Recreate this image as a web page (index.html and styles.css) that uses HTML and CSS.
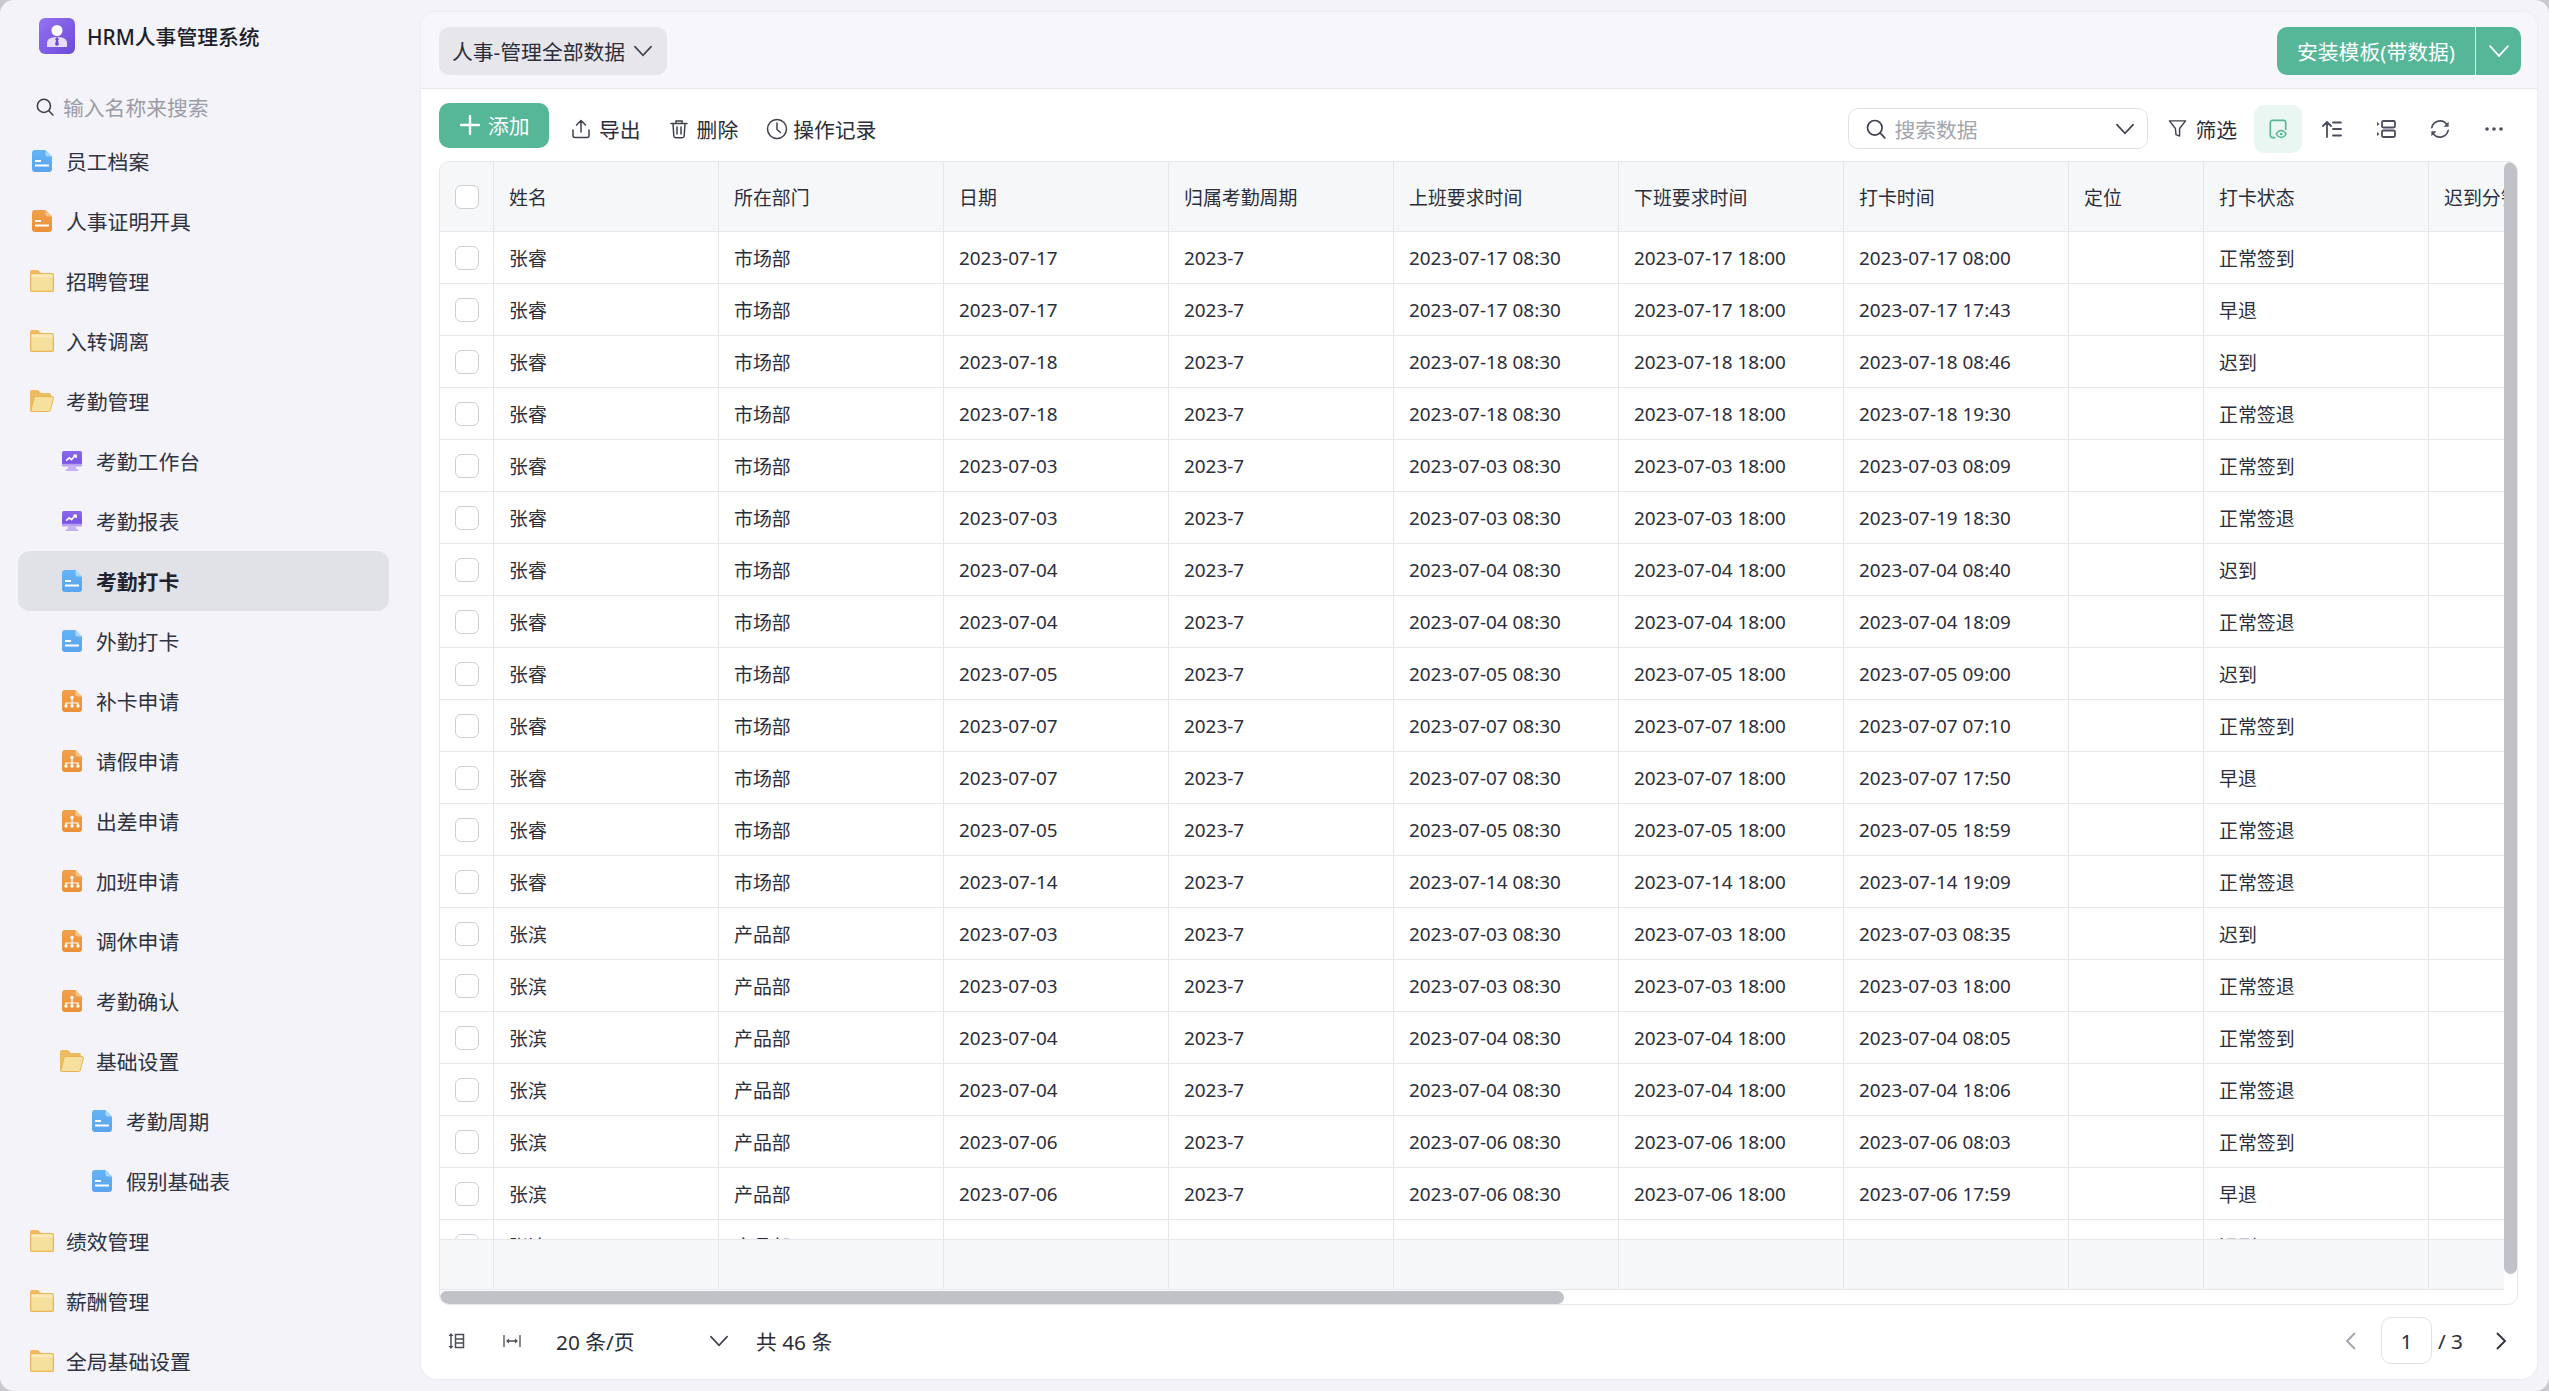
FILE: index.html
```html
<!DOCTYPE html>
<html>

<head>
  <meta charset="utf-8">
  <title>HRM人事管理系统</title>
  <link rel="stylesheet" href="styles.css">
</head>

<body>
  <svg class="sprite" xmlns="http://www.w3.org/2000/svg">
    <defs>
      <linearGradient id="gradLogo" x1="0" y1="0" x2="1" y2="1"><stop offset="0" stop-color="#9473f2"/><stop offset="1" stop-color="#6c49d8"/></linearGradient>
      <linearGradient id="gradBlue" x1="0" y1="0" x2="0" y2="1"><stop offset="0" stop-color="#64b3f6"/><stop offset="1" stop-color="#5aa4ee"/></linearGradient>
      <linearGradient id="gradOrange" x1="0" y1="0" x2="0" y2="1"><stop offset="0" stop-color="#f0a04c"/><stop offset="1" stop-color="#eb9038"/></linearGradient>
      <linearGradient id="gradPurple" x1="0" y1="0" x2="0" y2="1"><stop offset="0" stop-color="#8a68ea"/><stop offset="1" stop-color="#7752e2"/></linearGradient>
    </defs>
    <symbol id="iconDocBlue" viewBox="0 0 20 22">
      <path fill="url(#gradBlue)" d="M3 0h10.5L20 6.5V19a3 3 0 0 1-3 3H3a3 3 0 0 1-3-3V3a3 3 0 0 1 3-3z"/>
      <path fill="#a9d8fb" d="M13.5 0L20 6.5h-4.5a2 2 0 0 1-2-2z"/>
      <rect fill="#fff" x="3" y="10" width="6" height="2"/>
      <rect fill="#fff" x="3" y="14.5" width="14" height="2"/>
    </symbol>
    <symbol id="iconDocOrange" viewBox="0 0 20 22">
      <path fill="url(#gradOrange)" d="M3 0h10.5L20 6.5V19a3 3 0 0 1-3 3H3a3 3 0 0 1-3-3V3a3 3 0 0 1 3-3z"/>
      <path fill="#f7c48d" d="M13.5 0L20 6.5h-4.5a2 2 0 0 1-2-2z"/>
      <rect fill="#fff" x="3" y="10" width="6" height="2"/>
      <rect fill="#fff" x="3" y="14.5" width="14" height="2"/>
    </symbol>
    <symbol id="iconOrg" viewBox="0 0 20 22">
      <path fill="url(#gradOrange)" d="M3 0h10.5L20 6.5V19a3 3 0 0 1-3 3H3a3 3 0 0 1-3-3V3a3 3 0 0 1 3-3z"/>
      <path fill="#f7c48d" d="M13.5 0L20 6.5h-4.5a2 2 0 0 1-2-2z"/>
      <path fill="none" stroke="#fff" stroke-width="1.2" d="M10 8v8M4 16v-3h12v3"/>
      <circle fill="#fff" cx="10" cy="7.5" r="1.7"/>
      <circle fill="#fff" cx="4" cy="16" r="1.7"/>
      <circle fill="#fff" cx="10" cy="16" r="1.7"/>
      <circle fill="#fff" cx="16" cy="16" r="1.7"/>
    </symbol>
    <symbol id="iconFolder" viewBox="0 0 24 22">
      <path fill="#edbb60" d="M2 0h6l3 3h11a2 2 0 0 1 2 2v15a2 2 0 0 1-2 2H2a2 2 0 0 1-2-2V2a2 2 0 0 1 2-2z"/>
      <rect fill="#f6e09d" x="0.8" y="3.8" width="22.4" height="17.4" rx="1.6" stroke="#e9b355" stroke-width="1"/>
      <rect fill="#f9e9b6" x="1.4" y="4.4" width="21.2" height="3"/>
    </symbol>
    <symbol id="iconFolderOpen" viewBox="0 0 24 22">
      <path fill="#edbb60" d="M2 0h6l3 3h8a2 2 0 0 1 2 2v3H6L3 22H2a2 2 0 0 1-2-2V2a2 2 0 0 1 2-2z"/>
      <path fill="#f6e09d" stroke="#e9b355" stroke-width="1" d="M5.5 6.5H22a1.5 1.5 0 0 1 1.4 2l-3 11.500a2 2 0 0 1-1.900 1.500H2.500a1.500 1.500 0 0 1-1.400-2l3-12a1.500 1.500 0 0 1 1.400-1z"/>
    </symbol>
    <symbol id="iconMonitor" viewBox="0 0 22 22">
      <path fill="#c5aff6" d="M7 17h8l1 3h2v2H4v-2h2z"/>
      <rect fill="url(#gradPurple)" width="22" height="16" rx="2"/>
      <rect fill="#b9a1f3" y="14" width="22" height="3" rx="1"/>
      <path fill="none" stroke="#fff" stroke-width="1.800" d="M4.500 10.500l3.500-3 2.500 2 4-4.500M12.500 4.800h3v3"/>
    </symbol>
    <symbol id="iconChevron" viewBox="0 0 16 16">
      <path fill="none" stroke="currentColor" stroke-width="1.300" stroke-linecap="round" d="M1.500 4.500L8 11.500l6.500-7"/>
    </symbol>
    <symbol id="iconSearch" viewBox="0 0 20 20">
      <circle fill="none" stroke="currentColor" stroke-width="1.700" cx="8.800" cy="8.800" r="7.300"/>
      <path fill="none" stroke="currentColor" stroke-width="1.700" stroke-linecap="round" d="M14.200 14.200L18.800 18.800"/>
    </symbol>
  </svg>

  <div class="app">
    <aside class="sidebar">
      <div class="brand">
        <svg class="logo" viewBox="0 0 36 36">
          <rect width="36" height="36" rx="6" fill="url(#gradLogo)"/>
          <circle cx="18" cy="12.500" r="5.500" fill="#fff"/>
          <path fill="#e6dcfb" d="M8 29v-4c0-4 4-6 10-6s10 2 10 6v4z"/>
          <path fill="#6c49d8" d="M17 19.500h2l.800 2-.8 1 1 4-2 1.500-2-1.500 1-4-.8-1z"/>
        </svg>
        <span class="brandName">HRM人事管理系统</span>
      </div>
      <div class="navSearch">
        <svg class="navSearchIcon"><use href="#iconSearch"/></svg>
        <span>输入名称来搜索</span>
      </div>
      <nav class="nav">
        <a class="navItem"><svg class="navIcon"><use href="#iconDocBlue"/></svg>员工档案</a>
        <a class="navItem"><svg class="navIcon"><use href="#iconDocOrange"/></svg>人事证明开具</a>
        <a class="navItem"><svg class="navIcon wide"><use href="#iconFolder"/></svg>招聘管理</a>
        <a class="navItem"><svg class="navIcon wide"><use href="#iconFolder"/></svg>入转调离</a>
        <a class="navItem"><svg class="navIcon wide"><use href="#iconFolderOpen"/></svg>考勤管理</a>
        <a class="navItem level1"><svg class="navIcon"><use href="#iconMonitor"/></svg>考勤工作台</a>
        <a class="navItem level1"><svg class="navIcon"><use href="#iconMonitor"/></svg>考勤报表</a>
        <a class="navItem level1 active"><svg class="navIcon"><use href="#iconDocBlue"/></svg>考勤打卡</a>
        <a class="navItem level1"><svg class="navIcon"><use href="#iconDocBlue"/></svg>外勤打卡</a>
        <a class="navItem level1"><svg class="navIcon"><use href="#iconOrg"/></svg>补卡申请</a>
        <a class="navItem level1"><svg class="navIcon"><use href="#iconOrg"/></svg>请假申请</a>
        <a class="navItem level1"><svg class="navIcon"><use href="#iconOrg"/></svg>出差申请</a>
        <a class="navItem level1"><svg class="navIcon"><use href="#iconOrg"/></svg>加班申请</a>
        <a class="navItem level1"><svg class="navIcon"><use href="#iconOrg"/></svg>调休申请</a>
        <a class="navItem level1"><svg class="navIcon"><use href="#iconOrg"/></svg>考勤确认</a>
        <a class="navItem level1"><svg class="navIcon wide"><use href="#iconFolderOpen"/></svg>基础设置</a>
        <a class="navItem level2"><svg class="navIcon"><use href="#iconDocBlue"/></svg>考勤周期</a>
        <a class="navItem level2"><svg class="navIcon"><use href="#iconDocBlue"/></svg>假别基础表</a>
        <a class="navItem"><svg class="navIcon wide"><use href="#iconFolder"/></svg>绩效管理</a>
        <a class="navItem"><svg class="navIcon wide"><use href="#iconFolder"/></svg>薪酬管理</a>
        <a class="navItem"><svg class="navIcon wide"><use href="#iconFolder"/></svg>全局基础设置</a>
      </nav>
    </aside>

    <main class="panel">
      <div class="topBar">
        <div class="viewSelect">人事-管理全部数据<svg class="chevron"><use href="#iconChevron"/></svg></div>
        <div class="installBtn">
          <span class="installText">安装模板(带数据)</span>
          <span class="installMore"><svg class="chevron"><use href="#iconChevron"/></svg></span>
        </div>
      </div>

      <div class="toolBar">
        <div class="toolGroup">
          <button class="addBtn"><svg class="addIcon" viewBox="0 0 20 20"><path fill="none" stroke="#fff" stroke-width="2.400" stroke-linecap="round" d="M10 1v18M1 10h18"/></svg>添加</button>
          <span class="toolLink exportLink"><svg class="toolIcon" viewBox="0 0 20 20"><path fill="none" stroke="currentColor" stroke-width="1.500" stroke-linecap="round" stroke-linejoin="round" d="M10 13V1.500M5.500 6L10 1.500 14.500 6M2 11v5.500A2 2 0 0 0 4 18.500h12a2 2 0 0 0 2-2V11"/></svg>导出</span>
          <span class="toolLink deleteLink"><svg class="toolIcon" viewBox="0 0 20 20"><path fill="none" stroke="currentColor" stroke-width="1.500" stroke-linecap="round" d="M2 4.500h16M7 4.500V2h6v2.500M4 4.500l.8 12.500a2 2 0 0 0 2 1.800h6.400a2 2 0 0 0 2-1.800L16 4.500M8 8v7M12 8v7"/></svg>删除</span>
          <span class="toolLink recordLink"><svg class="toolIcon" viewBox="0 0 22 22"><circle cx="11" cy="11" r="9.500" fill="none" stroke="currentColor" stroke-width="1.500"/><path fill="none" stroke="currentColor" stroke-width="1.500" stroke-linecap="round" stroke-linejoin="round" d="M11 5v6.500l3.500 3"/></svg>操作记录</span>
        </div>
        <div class="toolGroup">
          <div class="searchBox">
            <svg class="searchIcon"><use href="#iconSearch"/></svg>
            <span class="searchText">搜索数据</span>
            <svg class="chevron"><use href="#iconChevron"/></svg>
          </div>
          <span class="toolLink filterLink"><svg class="toolIcon" viewBox="0 0 20 20"><path fill="none" stroke="currentColor" stroke-width="1.500" stroke-linejoin="round" d="M1.500 2h17l-6.300 8v8l-3.800-1.500-.6-6.500z"/></svg>筛选</span>
          <span class="iconBtn on"><svg class="btnIcon" viewBox="0 0 20 22"><path fill="none" stroke="#56b698" stroke-width="1.800" d="M7 20.500H4a2.500 2.500 0 0 1-2.500-2.500V4A2.500 2.500 0 0 1 4 1.500h12A2.500 2.500 0 0 1 18.500 4v8"/><path fill="none" stroke="#56b698" stroke-width="1.600" d="M8 16.500c1.500-2.500 3.500-3.800 5.500-3.800s4 1.300 5.500 3.800c-1.500 2.500-3.500 3.800-5.500 3.800s-4-1.300-5.500-3.800z"/><circle cx="13.500" cy="16.500" r="1.500" fill="#56b698"/></svg></span>
          <span class="iconBtn"><svg class="btnIcon" viewBox="0 0 20 20"><path fill="none" stroke="currentColor" stroke-width="1.800" stroke-linecap="round" stroke-linejoin="round" d="M5 18V3M1 7l4-4 4 4M11 3.500h8M11 10h8M11 16.500h8"/></svg></span>
          <span class="iconBtn"><svg class="btnIcon" viewBox="0 0 20 20"><rect x="6" y="2" width="13" height="6.500" rx="1.500" fill="none" stroke="currentColor" stroke-width="1.800"/><rect x="6" y="11.500" width="13" height="6.500" rx="1.500" fill="none" stroke="currentColor" stroke-width="1.800"/><path fill="currentColor" d="M1 3l2.500 2L1 7zM1 13l2.500 2L1 17z"/></svg></span>
          <span class="iconBtn"><svg class="btnIcon" viewBox="0 0 22 22"><path fill="none" stroke="currentColor" stroke-width="1.800" stroke-linecap="round" d="M2 9.500A9.200 9.200 0 0 1 18.500 6M20 12.500A9.200 9.200 0 0 1 3.500 16"/><path fill="currentColor" d="M20.500 3v5.500H15zM1.500 19v-5.500H7z"/></svg></span>
          <span class="iconBtn"><svg class="btnIcon" viewBox="0 0 20 20"><circle cx="3" cy="10" r="1.800" fill="currentColor"/><circle cx="10" cy="10" r="1.800" fill="currentColor"/><circle cx="17" cy="10" r="1.800" fill="currentColor"/></svg></span>
        </div>
      </div>

      <div class="tableView">
        <div class="tableScroll">
          <div class="grid">
            <div class="row head">
              <div class="cell"><i class="check"></i></div><div class="cell">姓名</div><div class="cell">所在部门</div><div class="cell">日期</div><div class="cell">归属考勤周期</div><div class="cell">上班要求时间</div><div class="cell">下班要求时间</div><div class="cell">打卡时间</div><div class="cell">定位</div><div class="cell">打卡状态</div><div class="cell">迟到分钟</div>
            </div>
            <div class="gridBody">
              <div class="row"><div class="cell"><i class="check"></i></div><div class="cell">张睿</div><div class="cell">市场部</div><div class="cell">2023-07-17</div><div class="cell">2023-7</div><div class="cell">2023-07-17 08:30</div><div class="cell">2023-07-17 18:00</div><div class="cell">2023-07-17 08:00</div><div class="cell"></div><div class="cell">正常签到</div><div class="cell"></div></div>
              <div class="row"><div class="cell"><i class="check"></i></div><div class="cell">张睿</div><div class="cell">市场部</div><div class="cell">2023-07-17</div><div class="cell">2023-7</div><div class="cell">2023-07-17 08:30</div><div class="cell">2023-07-17 18:00</div><div class="cell">2023-07-17 17:43</div><div class="cell"></div><div class="cell">早退</div><div class="cell"></div></div>
              <div class="row"><div class="cell"><i class="check"></i></div><div class="cell">张睿</div><div class="cell">市场部</div><div class="cell">2023-07-18</div><div class="cell">2023-7</div><div class="cell">2023-07-18 08:30</div><div class="cell">2023-07-18 18:00</div><div class="cell">2023-07-18 08:46</div><div class="cell"></div><div class="cell">迟到</div><div class="cell"></div></div>
              <div class="row"><div class="cell"><i class="check"></i></div><div class="cell">张睿</div><div class="cell">市场部</div><div class="cell">2023-07-18</div><div class="cell">2023-7</div><div class="cell">2023-07-18 08:30</div><div class="cell">2023-07-18 18:00</div><div class="cell">2023-07-18 19:30</div><div class="cell"></div><div class="cell">正常签退</div><div class="cell"></div></div>
              <div class="row"><div class="cell"><i class="check"></i></div><div class="cell">张睿</div><div class="cell">市场部</div><div class="cell">2023-07-03</div><div class="cell">2023-7</div><div class="cell">2023-07-03 08:30</div><div class="cell">2023-07-03 18:00</div><div class="cell">2023-07-03 08:09</div><div class="cell"></div><div class="cell">正常签到</div><div class="cell"></div></div>
              <div class="row"><div class="cell"><i class="check"></i></div><div class="cell">张睿</div><div class="cell">市场部</div><div class="cell">2023-07-03</div><div class="cell">2023-7</div><div class="cell">2023-07-03 08:30</div><div class="cell">2023-07-03 18:00</div><div class="cell">2023-07-19 18:30</div><div class="cell"></div><div class="cell">正常签退</div><div class="cell"></div></div>
              <div class="row"><div class="cell"><i class="check"></i></div><div class="cell">张睿</div><div class="cell">市场部</div><div class="cell">2023-07-04</div><div class="cell">2023-7</div><div class="cell">2023-07-04 08:30</div><div class="cell">2023-07-04 18:00</div><div class="cell">2023-07-04 08:40</div><div class="cell"></div><div class="cell">迟到</div><div class="cell"></div></div>
              <div class="row"><div class="cell"><i class="check"></i></div><div class="cell">张睿</div><div class="cell">市场部</div><div class="cell">2023-07-04</div><div class="cell">2023-7</div><div class="cell">2023-07-04 08:30</div><div class="cell">2023-07-04 18:00</div><div class="cell">2023-07-04 18:09</div><div class="cell"></div><div class="cell">正常签退</div><div class="cell"></div></div>
              <div class="row"><div class="cell"><i class="check"></i></div><div class="cell">张睿</div><div class="cell">市场部</div><div class="cell">2023-07-05</div><div class="cell">2023-7</div><div class="cell">2023-07-05 08:30</div><div class="cell">2023-07-05 18:00</div><div class="cell">2023-07-05 09:00</div><div class="cell"></div><div class="cell">迟到</div><div class="cell"></div></div>
              <div class="row"><div class="cell"><i class="check"></i></div><div class="cell">张睿</div><div class="cell">市场部</div><div class="cell">2023-07-07</div><div class="cell">2023-7</div><div class="cell">2023-07-07 08:30</div><div class="cell">2023-07-07 18:00</div><div class="cell">2023-07-07 07:10</div><div class="cell"></div><div class="cell">正常签到</div><div class="cell"></div></div>
              <div class="row"><div class="cell"><i class="check"></i></div><div class="cell">张睿</div><div class="cell">市场部</div><div class="cell">2023-07-07</div><div class="cell">2023-7</div><div class="cell">2023-07-07 08:30</div><div class="cell">2023-07-07 18:00</div><div class="cell">2023-07-07 17:50</div><div class="cell"></div><div class="cell">早退</div><div class="cell"></div></div>
              <div class="row"><div class="cell"><i class="check"></i></div><div class="cell">张睿</div><div class="cell">市场部</div><div class="cell">2023-07-05</div><div class="cell">2023-7</div><div class="cell">2023-07-05 08:30</div><div class="cell">2023-07-05 18:00</div><div class="cell">2023-07-05 18:59</div><div class="cell"></div><div class="cell">正常签退</div><div class="cell"></div></div>
              <div class="row"><div class="cell"><i class="check"></i></div><div class="cell">张睿</div><div class="cell">市场部</div><div class="cell">2023-07-14</div><div class="cell">2023-7</div><div class="cell">2023-07-14 08:30</div><div class="cell">2023-07-14 18:00</div><div class="cell">2023-07-14 19:09</div><div class="cell"></div><div class="cell">正常签退</div><div class="cell"></div></div>
              <div class="row"><div class="cell"><i class="check"></i></div><div class="cell">张滨</div><div class="cell">产品部</div><div class="cell">2023-07-03</div><div class="cell">2023-7</div><div class="cell">2023-07-03 08:30</div><div class="cell">2023-07-03 18:00</div><div class="cell">2023-07-03 08:35</div><div class="cell"></div><div class="cell">迟到</div><div class="cell"></div></div>
              <div class="row"><div class="cell"><i class="check"></i></div><div class="cell">张滨</div><div class="cell">产品部</div><div class="cell">2023-07-03</div><div class="cell">2023-7</div><div class="cell">2023-07-03 08:30</div><div class="cell">2023-07-03 18:00</div><div class="cell">2023-07-03 18:00</div><div class="cell"></div><div class="cell">正常签退</div><div class="cell"></div></div>
              <div class="row"><div class="cell"><i class="check"></i></div><div class="cell">张滨</div><div class="cell">产品部</div><div class="cell">2023-07-04</div><div class="cell">2023-7</div><div class="cell">2023-07-04 08:30</div><div class="cell">2023-07-04 18:00</div><div class="cell">2023-07-04 08:05</div><div class="cell"></div><div class="cell">正常签到</div><div class="cell"></div></div>
              <div class="row"><div class="cell"><i class="check"></i></div><div class="cell">张滨</div><div class="cell">产品部</div><div class="cell">2023-07-04</div><div class="cell">2023-7</div><div class="cell">2023-07-04 08:30</div><div class="cell">2023-07-04 18:00</div><div class="cell">2023-07-04 18:06</div><div class="cell"></div><div class="cell">正常签退</div><div class="cell"></div></div>
              <div class="row"><div class="cell"><i class="check"></i></div><div class="cell">张滨</div><div class="cell">产品部</div><div class="cell">2023-07-06</div><div class="cell">2023-7</div><div class="cell">2023-07-06 08:30</div><div class="cell">2023-07-06 18:00</div><div class="cell">2023-07-06 08:03</div><div class="cell"></div><div class="cell">正常签到</div><div class="cell"></div></div>
              <div class="row"><div class="cell"><i class="check"></i></div><div class="cell">张滨</div><div class="cell">产品部</div><div class="cell">2023-07-06</div><div class="cell">2023-7</div><div class="cell">2023-07-06 08:30</div><div class="cell">2023-07-06 18:00</div><div class="cell">2023-07-06 17:59</div><div class="cell"></div><div class="cell">早退</div><div class="cell"></div></div>
              <div class="row"><div class="cell"><i class="check"></i></div><div class="cell">张滨</div><div class="cell">产品部</div><div class="cell">2023-07-07</div><div class="cell">2023-7</div><div class="cell">2023-07-07 08:30</div><div class="cell">2023-07-07 18:00</div><div class="cell">2023-07-07 08:41</div><div class="cell"></div><div class="cell">迟到</div><div class="cell"></div></div>
            </div>
            <div class="row foot">
              <div class="cell"></div><div class="cell"></div><div class="cell"></div><div class="cell"></div><div class="cell"></div><div class="cell"></div><div class="cell"></div><div class="cell"></div><div class="cell"></div><div class="cell"></div><div class="cell"></div>
            </div>
          </div>
          <div class="vBar"><div class="vThumb"></div></div>
        </div>
        <div class="hBar"><div class="hThumb"></div></div>
      </div>

      <div class="pager">
        <div class="pagerLeft">
          <svg class="pagerIcon" viewBox="0 0 18 18"><path fill="none" stroke="currentColor" stroke-width="1.500" d="M7.500 2.500h8v13h-8zM7.500 7h8M7.500 11h8M3 2v14"/><path fill="currentColor" d="M0.500 4L3 1l2.500 3zM0.500 14L3 17l2.500-3z"/></svg>
          <svg class="pagerIcon second" viewBox="0 0 18 18"><path fill="none" stroke="currentColor" stroke-width="1.300" d="M1 3v12M17 3v12M4 9h10"/><path fill="currentColor" d="M3 9l3-2.500v5zM15 9l-3-2.500v5z"/></svg>
          <span class="pageSize">20 条/页</span>
          <svg class="chevron"><use href="#iconChevron"/></svg>
          <span class="pageTotal">共 46 条</span>
        </div>
        <div class="pagerRight">
          <svg class="pageArrow off" viewBox="0 0 12 20"><path fill="none" stroke="currentColor" stroke-width="1.800" d="M10 2L2 10l8 8"/></svg>
          <span class="pageInput">1</span>
          <span class="pageCount">/ 3</span>
          <svg class="pageArrow next" viewBox="0 0 12 20"><path fill="none" stroke="currentColor" stroke-width="1.800" d="M2 2l8 8-8 8"/></svg>
        </div>
      </div>
    </main>
  </div>
</body>

</html>
```

FILE: styles.css
```css
* {
  box-sizing: border-box;
}

html,
body {
  margin: 0;
  height: 100%;
  overflow: hidden;
  background: #c9c9ce;
}

body {
  font-family: "Noto Sans", "Noto Sans CJK SC", sans-serif;
  color: #2b2e3a;
}

.sprite {
  position: absolute;
  width: 0;
  height: 0;
}

.app {
  display: flex;
  height: 100%;
  background: #f3f3f9;
  border-radius: 14px;
  overflow: hidden;
}

/* sidebar */
.sidebar {
  width: 421px;
  flex: none;
  overflow: hidden;
}

.brand {
  display: flex;
  align-items: center;
  gap: 12px;
  padding: 18px 0 0 39px;
}

.logo {
  width: 36px;
  height: 36px;
}

.brandName {
  font-size: 20.8px;
  font-weight: 500;
  color: #1c1f2b;
}

.navSearch {
  display: flex;
  align-items: center;
  gap: 9px;
  height: 30px;
  margin-top: 38px;
  padding-left: 36px;
  font-size: 20.8px;
  color: #9b9ca5;
}

.navSearchIcon {
  width: 18px;
  height: 18px;
  color: #3a3d48;
}

.nav {
  margin-top: 9px;
}

.navItem {
  display: flex;
  align-items: center;
  height: 60px;
  width: 371px;
  margin-left: 18px;
  padding-left: 14px;
  border-radius: 12px;
  font-size: 20.8px;
  color: #2f3240;
}

.navItem.level1 {
  padding-left: 44px;
}

.navItem.level2 {
  padding-left: 74px;
}

.navItem.active {
  background: #e1e2e7;
  font-weight: 600;
  color: #20232f;
}

.navIcon {
  width: 20px;
  height: 22px;
  margin-right: 14px;
  flex: none;
}

.navIcon.wide {
  width: 24px;
  margin-left: -2px;
  margin-right: 12px;
}

/* panel */
.panel {
  flex: 1;
  display: flex;
  flex-direction: column;
  min-width: 0;
  margin: 12px 12px 12px 0;
  background: #fff;
  border-radius: 16px;
  overflow: hidden;
  box-shadow: 0 0 3px rgba(60, 60, 90, 0.08);
}

.topBar {
  display: flex;
  justify-content: space-between;
  align-items: flex-start;
  height: 77px;
  padding: 15px 16px 0 18px;
  background: #f6f6fb;
  border-bottom: 1px solid #e6e7ec;
  flex: none;
}

.viewSelect {
  display: flex;
  align-items: center;
  height: 48px;
  padding: 0 14px 0 13px;
  border-radius: 10px;
  background: #e7e7eb;
  font-size: 20.8px;
}

.chevron {
  width: 20px;
  height: 20px;
  color: #3f424e;
  flex: none;
}

.viewSelect .chevron {
  margin-left: 8px;
}

.installBtn {
  display: flex;
  height: 48px;
  border-radius: 10px;
  overflow: hidden;
  background: #56b698;
  color: #fff;
  font-size: 20.8px;
}

.installText {
  display: flex;
  align-items: center;
  width: 198px;
  padding-left: 20px;
  white-space: nowrap;
}

.installMore {
  display: flex;
  align-items: center;
  justify-content: center;
  width: 46px;
  border-left: 1px solid #e8f6f1;
}

.installMore .chevron {
  width: 22px;
  height: 22px;
  color: #fff;
}

.toolBar {
  display: flex;
  justify-content: space-between;
  height: 72px;
  padding: 14px 19px 0 18px;
  flex: none;
}

.toolGroup {
  display: flex;
  align-items: center;
  height: 51px;
}

.addBtn {
  display: flex;
  align-items: center;
  align-self: flex-start;
  width: 110px;
  height: 45px;
  padding: 0 0 2px 21px;
  border: 0;
  border-radius: 10px;
  background: #56b698;
  color: #fff;
  font-family: inherit;
  font-size: 20.8px;
}

.addIcon {
  width: 20px;
  height: 20px;
  margin-right: 8px;
}

.toolLink {
  display: flex;
  align-items: center;
  font-size: 20.8px;
  white-space: nowrap;
}

.toolIcon {
  width: 20px;
  height: 20px;
  color: #3f424e;
  margin-right: 8px;
}

.exportLink {
  margin-left: 22px;
}

.deleteLink {
  margin-left: 28px;
}

.recordLink {
  margin-left: 28px;
}

.recordLink .toolIcon {
  width: 22px;
  height: 22px;
  margin-right: 5px;
}

.searchBox {
  display: flex;
  align-items: center;
  width: 300px;
  height: 41px;
  padding: 0 12px 0 17px;
  border: 1px solid #dfe0e6;
  border-radius: 10px;
}

.searchIcon {
  width: 20px;
  height: 20px;
  color: #3f424e;
  margin-right: 8px;
  flex: none;
}

.searchText {
  flex: 1;
  font-size: 20.8px;
  color: #a3a4ac;
}

.filterLink {
  margin-left: 20px;
  margin-right: 17px;
}

.filterLink .toolIcon {
  width: 19px;
  height: 19px;
}

.iconBtn {
  display: flex;
  align-items: center;
  justify-content: center;
  width: 48px;
  height: 48px;
  margin-left: 6px;
  border-radius: 10px;
  color: #4b4e5a;
}

.filterLink + .iconBtn {
  margin-left: 0;
}

.iconBtn.on {
  background: #e9f6f2;
}

.btnIcon {
  width: 20px;
  height: 20px;
}

/* table */
.tableView {
  display: flex;
  flex-direction: column;
  height: 1144px;
  margin: 0 19px 0 18px;
  border: 1px solid #e6e7ec;
  border-radius: 10px;
  overflow: hidden;
  flex: none;
}

.tableScroll {
  display: flex;
  flex: 1;
  min-height: 0;
}

.grid {
  display: flex;
  flex-direction: column;
  flex: 1;
  min-width: 0;
  overflow: hidden;
}

.gridBody {
  height: 1008px;
  overflow: hidden;
  flex: none;
}

.row {
  display: grid;
  grid-template-columns: 54px repeat(7, 225px) 135px 225px 225px;
  height: 52px;
  font-size: 18.9px;
}

.cell {
  display: flex;
  align-items: center;
  padding-left: 15px;
  border-right: 1px solid #e6e7ec;
  border-bottom: 1px solid #e6e7ec;
  white-space: nowrap;
  overflow: hidden;
}

.cell:first-child {
  justify-content: center;
  padding-left: 0;
}

.row.head {
  height: 70px;
  background: #f6f7f9;
  flex: none;
}

.row.foot {
  height: 51px;
  background: #f6f7f9;
  border-top: 1px solid #e6e7ec;
  margin-top: -1px;
  flex: none;
}

.check {
  display: block;
  width: 24px;
  height: 24px;
  background: #fff;
  border: 1.5px solid #cdced4;
  border-radius: 6px;
}

.vBar {
  width: 13px;
  flex: none;
}

.vThumb {
  height: 1112px;
  background: #c1c2c7;
  border-radius: 7px;
}

.hBar {
  height: 13px;
  flex: none;
}

.hThumb {
  width: 1124px;
  height: 13px;
  background: #c1c2c7;
  border-radius: 7px;
}

/* pager */
.pager {
  display: flex;
  justify-content: space-between;
  align-items: center;
  flex: 1;
  padding: 0 30px 3px 27px;
  font-size: 20.8px;
}

.pagerLeft,
.pagerRight {
  display: flex;
  align-items: center;
}

.pagerIcon {
  width: 18px;
  height: 18px;
  color: #4b4e5a;
}

.pagerIcon.second {
  margin-left: 37px;
}

.pageSize {
  width: 153px;
  margin-left: 35px;
}

.pageTotal {
  margin-left: 27px;
}

.pageArrow {
  width: 12px;
  height: 20px;
  color: #2b2e3a;
}

.pageArrow.off {
  color: #a3a4ac;
  margin-right: 24px;
}

.pageArrow.next {
  margin-left: 32px;
}

.pageInput {
  display: flex;
  align-items: center;
  justify-content: center;
  width: 51px;
  height: 47px;
  border: 1px solid #dfe0e6;
  border-radius: 10px;
}

.pageCount {
  margin-left: 6px;
}
```
